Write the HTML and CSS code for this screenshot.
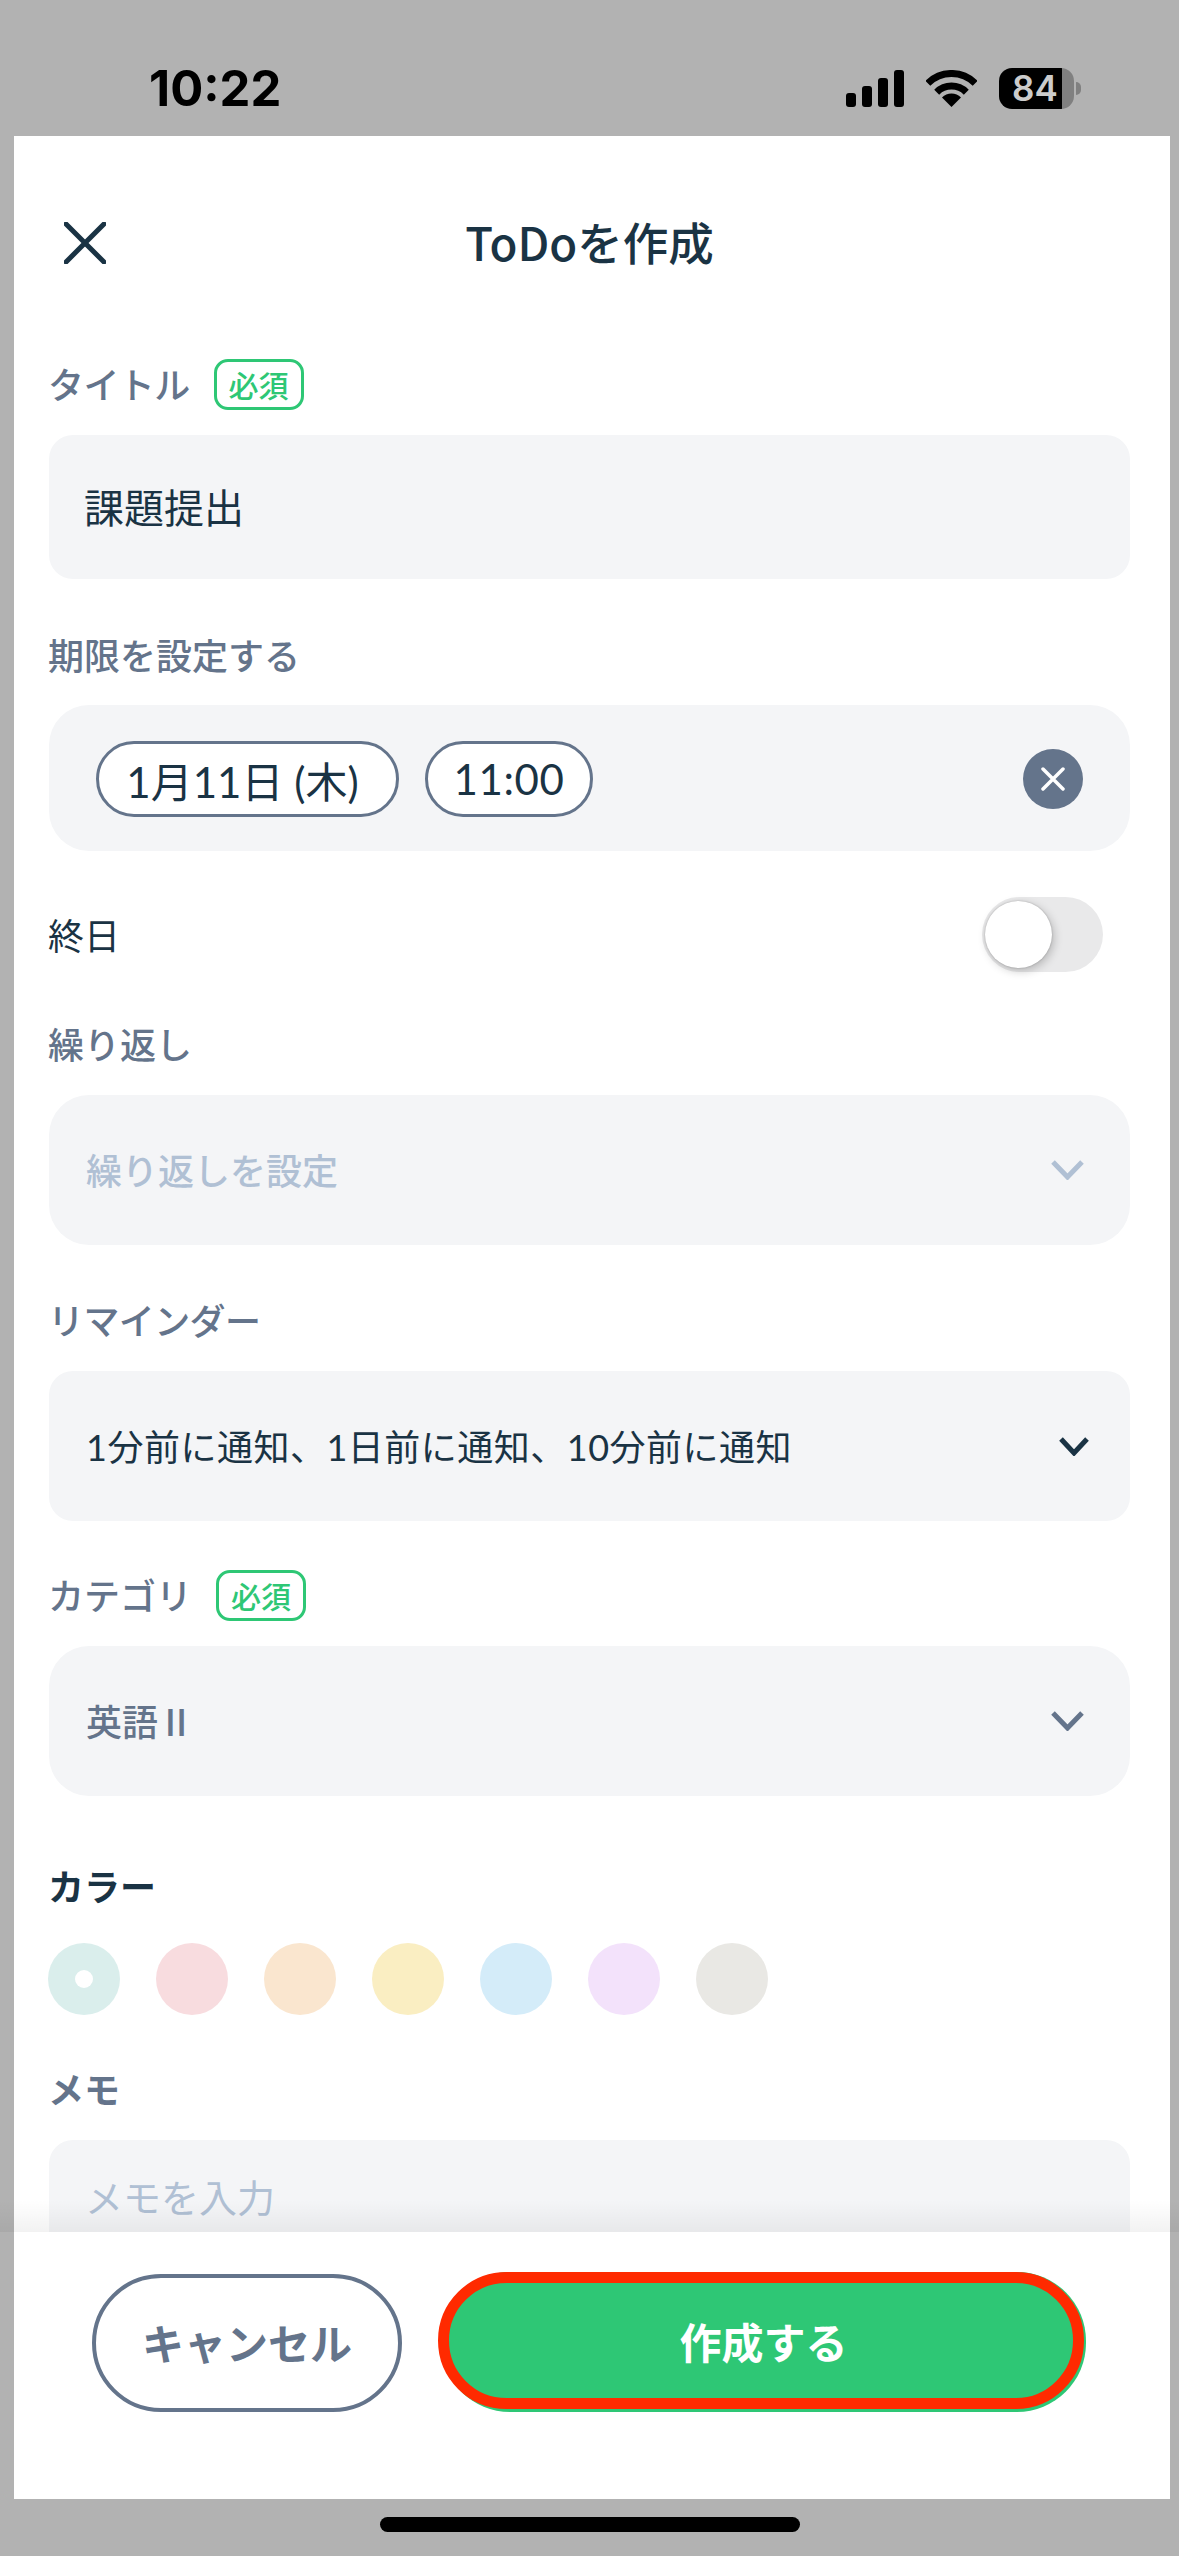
FILE: index.html
```
<!DOCTYPE html>
<html lang="ja">
<head>
<meta charset="utf-8">
<title>ToDoを作成</title>
<link rel="stylesheet" href="styles.css">
</head>
<body>
<div class="status">
  <span class="time">10:22</span>
  <div class="status-icons">
    <svg class="signal" viewBox="0 0 58 37"><rect x="0" y="23" width="10" height="14" rx="3"/><rect x="16" y="16" width="10" height="21" rx="3"/><rect x="32" y="8" width="10" height="29" rx="3"/><rect x="48" y="0" width="10" height="37" rx="3"/></svg>
    <svg class="wifi" viewBox="0 0 51 37"><path class="wifi-arc" d="M1.8 13.3A33.5 33.5 0 0 1 49.2 13.3"/><path class="wifi-arc" d="M10.7 22.2A21 21 0 0 1 40.3 22.2"/><path d="M25.5 37L16 27.5A13.4 13.4 0 0 1 35 27.5Z"/></svg>
    <div class="battery">84</div>
  </div>
</div>
<div class="sheet">
  <div class="scroll">
    <header class="head">
      <svg class="close" viewBox="0 0 42 42"><path d="M2 2L40 40M40 2L2 40"/></svg>
      <h1 class="title">ToDoを作成</h1>
      <span></span>
    </header>
    <div class="field">
      <div class="label-row"><span class="label label-tight">タイトル</span><span class="badge">必須</span></div>
      <div class="box box-input"><span class="value-main">課題提出</span></div>
    </div>
    <div class="field">
      <div class="label-row label-row-tight"><span class="label">期限を設定する</span></div>
      <div class="box box-date">
        <span class="pill pill-date">1月11日 (木)</span>
        <span class="pill pill-time">11:00</span>
        <span class="clear"><svg viewBox="0 0 24 24"><path d="M2 2L22 22M22 2L2 22"/></svg></span>
      </div>
    </div>
    <div class="allday">
      <span class="allday-text">終日</span>
      <span class="switch"><span class="knob"></span></span>
    </div>
    <div class="field field-repeat">
      <div class="label-row"><span class="label">繰り返し</span></div>
      <div class="box box-select box-round"><span class="value value-placeholder">繰り返しを設定</span><svg class="chev chev-light" viewBox="0 0 33 20"><path d="M2 2L16.5 17L31 2"/></svg></div>
    </div>
    <div class="field field-reminder">
      <div class="label-row"><span class="label label-tight">リマインダー</span></div>
      <div class="box box-select box-reminder"><span class="value value-long">1分前に通知、1日前に通知、10分前に通知</span><svg class="chev chev-dark" viewBox="0 0 30 19"><path d="M2 2L15 16L28 2"/></svg></div>
    </div>
    <div class="field field-category">
      <div class="label-row"><span class="label">カテゴリ</span><span class="badge">必須</span></div>
      <div class="box box-select box-round"><span class="value value-muted">英語Ⅱ</span><svg class="chev chev-mid" viewBox="0 0 33 20"><path d="M2 2L16.5 17L31 2"/></svg></div>
    </div>
    <div class="field-color">
      <div class="label-row label-row-color"><span class="label label-dark">カラー</span></div>
      <div class="swatches">
        <span class="swatch c1"><span class="dot"></span></span>
        <span class="swatch c2"></span>
        <span class="swatch c3"></span>
        <span class="swatch c4"></span>
        <span class="swatch c5"></span>
        <span class="swatch c6"></span>
        <span class="swatch c7"></span>
      </div>
    </div>
    <div class="field field-memo">
      <div class="label-row"><span class="label label-bold">メモ</span></div>
      <div class="box box-memo"><span class="memo-text">メモを入力</span></div>
    </div>
  </div>
  <footer class="footer">
    <button class="btn btn-cancel">キャンセル</button>
    <button class="btn btn-create">作成する</button>
  </footer>
</div>
<div class="home"><span class="home-bar"></span></div>
</body>
</html>
```
FILE: styles.css
```
* { box-sizing: border-box; }
html, body { margin: 0; padding: 0; }
body {
  width: 1179px;
  height: 2556px;
  overflow: hidden;
  background: #b2b2b2;
  display: flex;
  flex-direction: column;
  font-family: Lato, "Noto Sans CJK JP", sans-serif;
  color: #1a3344;
}
.status {
  height: 136px;
  flex: none;
  padding: 40px 98px 0 149px;
  display: flex;
  align-items: center;
  justify-content: space-between;
}
.time {
  font-family: Inter, sans-serif;
  font-weight: 700;
  font-size: 49px;
  color: #000;
}
.status-icons { display: flex; align-items: center; gap: 22px; }
.signal { width: 58px; height: 37px; display: block; }
.wifi { width: 51px; height: 37px; display: block; }
.wifi-arc { fill: none; stroke: #000; stroke-width: 7; }
.battery {
  position: relative;
  width: 75px;
  height: 41px;
  border-radius: 13px;
  background: linear-gradient(90deg, #000 63px, #808080 63px);
  color: #ccc;
  font-family: Inter, sans-serif;
  font-weight: 600;
  font-size: 35px;
  line-height: 41px;
  padding-left: 13px;
  margin-right: 7px;
}
.battery::after {
  content: "";
  position: absolute;
  right: -7px;
  top: 14px;
  width: 5px;
  height: 13px;
  border-radius: 0 6px 6px 0;
  background: #808080;
}
.sheet {
  margin: 0 9px 0 14px;
  height: 2363px;
  flex: none;
  background: #fff;
  display: flex;
  flex-direction: column;
}
.scroll {
  height: 2096px;
  flex: none;
  overflow: hidden;
  padding: 0 40px 0 35px;
}
.head {
  height: 214px;
  margin-bottom: 10px;
  display: grid;
  grid-template-columns: 1fr auto 1fr;
  align-items: center;
}
.close { width: 42px; height: 42px; margin-left: 15px; display: block; }
.close path { fill: none; stroke: #1a3344; stroke-width: 5; stroke-linecap: square; }
.title {
  margin: 0 0 5px;
  font-family: "Noto Sans CJK JP", sans-serif;
  font-size: 45.5px;
  font-weight: 500;
  color: #1a3344;
}
.label-row { height: 50px; margin-bottom: 25px; display: flex; align-items: center; gap: 24px; }
.label-row-tight { margin-bottom: 24px; }
.label-row-color { margin-bottom: 31px; }
.label { font-size: 36px; font-weight: 500; color: #64748b; margin: 0 0 5px -1px; }
.label-tight { letter-spacing: -0.6px; }
.label-dark { color: #1a3344; font-weight: 700; }
.label-bold { font-weight: 700; }
.badge {
  width: 90px;
  height: 51px;
  margin-bottom: 2px;
  border: 3px solid #2ec775;
  border-radius: 14px;
  color: #2ec775;
  font-size: 30px;
  font-weight: 500;
  display: flex;
  align-items: center;
  justify-content: center;
}
.field { margin-bottom: 52px; }
.box { background: #f4f5f7; display: flex; align-items: center; }
.box-input { height: 144px; border-radius: 24px; padding: 0 0 2px 35px; }
.value-main { font-size: 40px; color: #1a3344; }
.box-date { height: 146px; border-radius: 40px; padding: 2px 47px 0; gap: 26px; }
.pill {
  height: 76px;
  border: 3.5px solid #64748b;
  border-radius: 38px;
  background: #fff;
  font-size: 42px;
  color: #1a3344;
  display: flex;
  align-items: center;
  justify-content: center;
}
.pill-date { width: 303px; padding-right: 10px; }
.pill-time { width: 168px; letter-spacing: 0.6px; }
.clear {
  margin-left: auto;
  width: 60px;
  height: 60px;
  border-radius: 50%;
  background: #64748b;
  display: flex;
  align-items: center;
  justify-content: center;
}
.clear svg { width: 24px; height: 24px; display: block; }
.clear path { fill: none; stroke: #fff; stroke-width: 3.5; stroke-linecap: round; }
.allday {
  margin-top: -6px;
  margin-bottom: 48px;
  height: 75px;
  padding-right: 27px;
  display: flex;
  align-items: center;
  justify-content: space-between;
}
.allday-text { font-size: 36px; color: #1a3344; margin: 0 0 2px -1px; }
.switch {
  position: relative;
  width: 121px;
  height: 75px;
  border-radius: 38px;
  background: #e9e9ea;
  display: block;
}
.knob {
  position: absolute;
  left: 3px;
  top: 4px;
  width: 67px;
  height: 67px;
  border-radius: 50%;
  background: #fff;
  box-shadow: 2px 3px 10px rgba(0, 0, 0, 0.22), 0 0 2px rgba(0, 0, 0, 0.25);
}
.field-repeat { margin-bottom: 51px; }
.field-reminder { margin-bottom: 50px; }
.field-category { margin-bottom: 66px; }
.box-select { height: 150px; padding: 0 46px 0 37px; justify-content: space-between; }
.box-round { border-radius: 40px; }
.box-reminder { border-radius: 24px; padding-right: 41px; }
.value { font-size: 36px; color: #1a3344; margin-bottom: 3px; }
.value-long { letter-spacing: 0.5px; }
.value-placeholder { color: #b0c0d4; font-weight: 500; }
.value-muted { color: #64748b; font-weight: 500; }
.chev { display: block; fill: none; stroke-width: 5; }
.chev path { fill: none; }
.chev-light { width: 33px; height: 20px; stroke: #b0c0d4; }
.chev-mid { width: 33px; height: 20px; stroke: #64748b; }
.chev-dark { width: 30px; height: 19px; stroke: #1a3344; }
.swatches { display: flex; gap: 36px; margin: 1px 0 50px -1px; }
.swatch {
  width: 72px;
  height: 72px;
  border-radius: 50%;
  display: flex;
  align-items: center;
  justify-content: center;
}
.dot { width: 18px; height: 18px; border-radius: 50%; background: #fff; }
.c1 { background: #daeeec; }
.c2 { background: #f8dcdf; }
.c3 { background: #fae6cf; }
.c4 { background: #faeec2; }
.c5 { background: #d4ecf9; }
.c6 { background: #f3e2fb; }
.c7 { background: #e9e8e4; }
.box-memo { height: 200px; border-radius: 24px; padding: 32px 0 0 36px; align-items: flex-start; }
.memo-text { font-size: 38px; color: #b0c0d4; line-height: 50px; }
.footer {
  position: relative;
  height: 267px;
  flex: none;
  background: #fff;
  padding: 0 0 87px 78px;
  display: flex;
  align-items: flex-end;
  gap: 39px;
}
.footer::before {
  content: "";
  position: absolute;
  left: -14px;
  right: -9px;
  top: -32px;
  height: 32px;
  background: linear-gradient(rgba(0, 0, 0, 0), rgba(0, 0, 0, 0.05));
}
.btn {
  font-family: "Noto Sans CJK JP", sans-serif;
  font-size: 42px;
  font-weight: 700;
  border-radius: 69px;
  padding: 0 0 3px;
}
.btn-cancel {
  width: 310px;
  height: 138px;
  background: #fff;
  border: 4px solid #64748b;
  color: #64748b;
}
.btn-create {
  position: relative;
  width: 645px;
  height: 140px;
  background: #2ec775;
  border: 0;
  color: #fff;
}
.btn-create::after {
  content: "";
  position: absolute;
  left: -3px;
  right: 2px;
  top: 0;
  bottom: 3px;
  border: 11px solid #ff2a00;
  border-radius: 69px;
}
.home {
  flex: 1;
  padding-top: 18px;
  display: flex;
  justify-content: center;
  align-items: flex-start;
}
.home-bar { width: 420px; height: 15px; border-radius: 8px; background: #000; }
```
